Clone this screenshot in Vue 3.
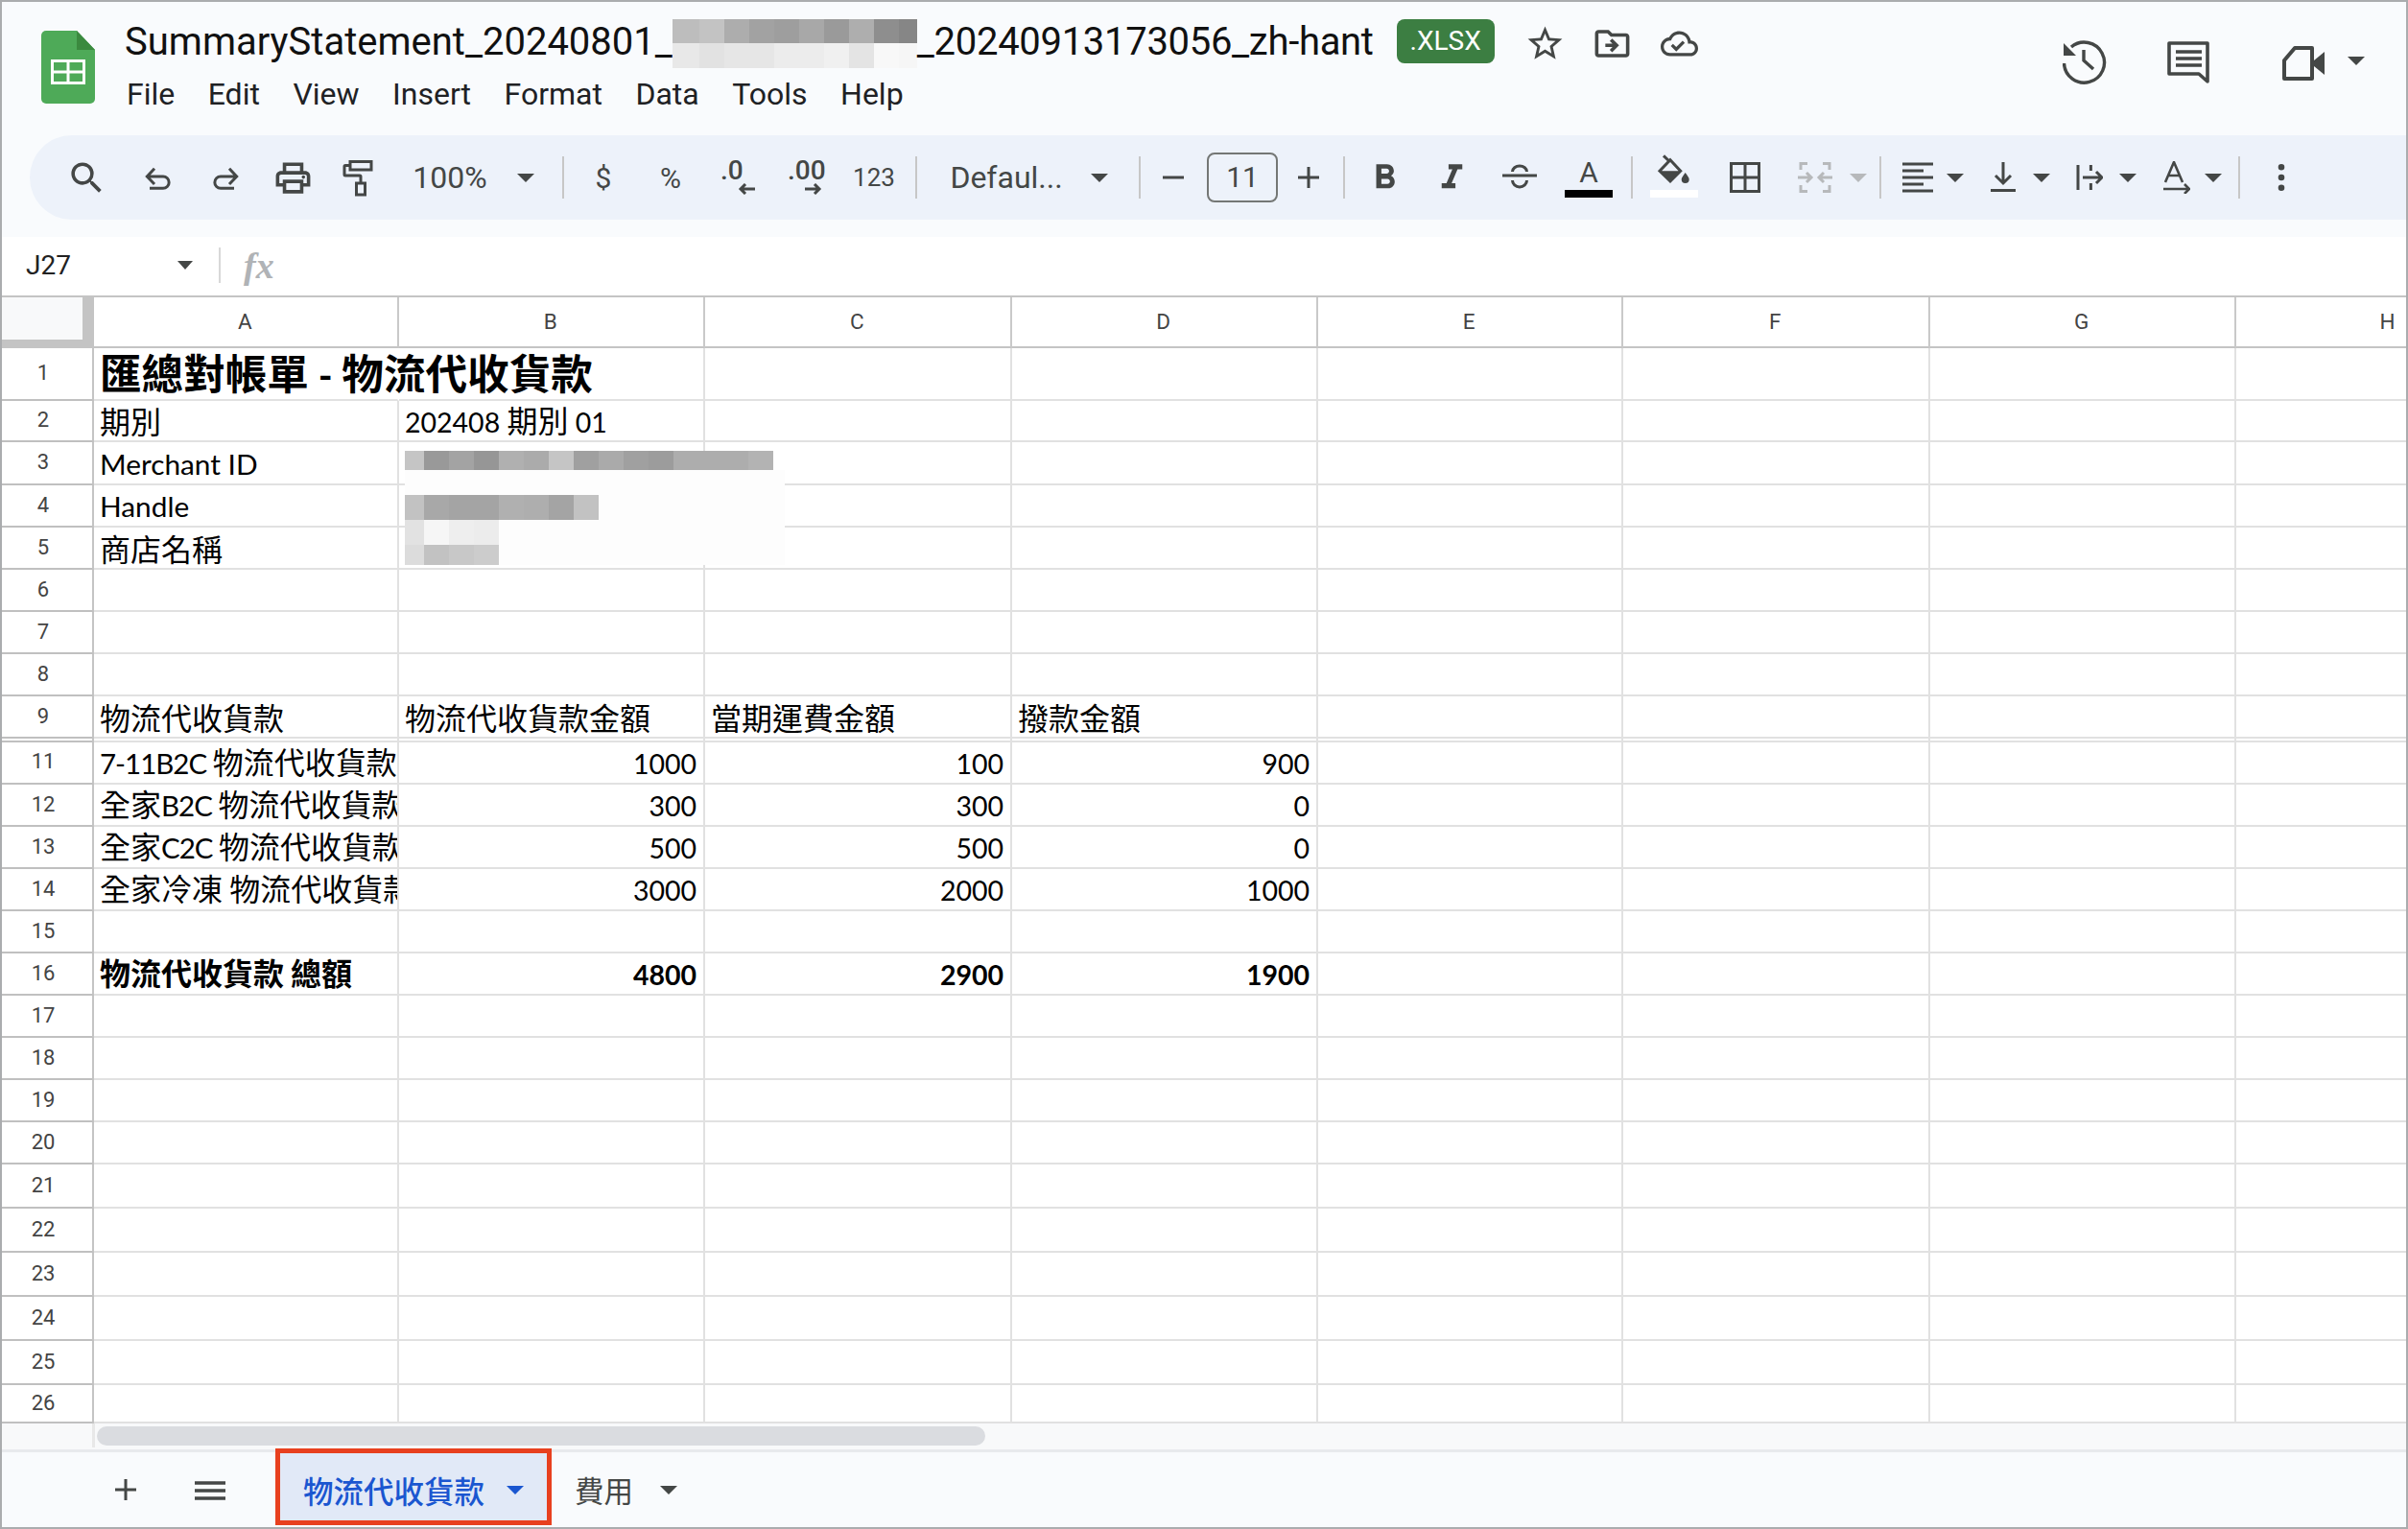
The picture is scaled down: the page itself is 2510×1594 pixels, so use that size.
<template>
  <div class="sheet-app">
    <header class="doc-head">
      <svg class="logo" width="56" height="76" viewBox="0 0 56 76">
        <path d="M5 0H37L56 20V71a5 5 0 0 1-5 5H5a5 5 0 0 1-5-5V5a5 5 0 0 1 5-5z" fill="#4eaa58" />
        <path d="M37 0 56 20H37z" fill="#3b8a3f" />
        <path d="M10 30H46V56H10zM13 33v8.5H26.5V33zM29.5 33v8.5H43V33zM13 44.5V53H26.5V44.5zM29.5 44.5V53H43V44.5z" fill="#fff" fill-rule="evenodd" />
      </svg>
      <div class="head-main">
        <div class="title-row">
          <span class="title">SummaryStatement_20240801_</span>
          <div class="title-blur">
            <i v-for="(c, i) in titleBlur" :key="i" :style="{ background: c }"></i>
          </div>
          <span class="title tail">_20240913173056_zh-hant</span>
          <span class="badge">.XLSX</span>
          <svg class="title-ic first" width="43" height="43" viewBox="0 0 24 24"><path :d="paths.star" /></svg>
          <svg class="title-ic" width="43" height="43" viewBox="0 0 24 24"><path :d="paths.move" /></svg>
          <svg class="title-ic cloud" width="39" height="39" viewBox="0 0 24 24"><path :d="paths.cloud" /></svg>
        </div>
        <nav class="menu">
          <span v-for="m in menus" :key="m">{{ m }}</span>
        </nav>
      </div>
      <div class="head-actions">
        <svg width="46" height="46" viewBox="0 0 46 46" class="act-history">
          <path d="M9 7A21 21 0 1 1 1.5 24" fill="none" stroke="currentColor" stroke-width="3.4" />
          <path d="M1 3V16H14z" fill="currentColor" />
          <path d="M22 10V21L32 30" fill="none" stroke="currentColor" stroke-width="3.4" />
        </svg>
        <svg width="44" height="46" viewBox="0 0 44 46" class="act-comment">
          <path d="M2 2H42V42L33 34H2z" fill="none" stroke="currentColor" stroke-width="3.6" stroke-linejoin="round" />
          <path d="M9 11H36M9 18H36M9 25H36" stroke="currentColor" stroke-width="3.6" />
        </svg>
        <svg width="44" height="36" viewBox="0 0 44 36" class="act-video">
          <path d="M2 15 13 2H31V34H2z" fill="none" stroke="currentColor" stroke-width="4" stroke-linejoin="round" />
          <path d="M33 15 44 6V30L33 21z" fill="currentColor" />
        </svg>
        <span class="caret act-caret"></span>
      </div>
    </header>

    <div class="toolbar">
      <div
        v-for="(t, i) in tools"
        :key="i"
        class="tool"
        :style="{ marginLeft: t.ml + 'px', width: t.w + 'px' }"
        :class="t.cls"
      >
        <span v-if="t.sep" class="sep"></span>
        <span v-else-if="t.caret" class="caret"></span>
        <span v-else-if="t.text" class="tool-text">{{ t.text }}</span>
        <template v-else-if="t.decimal">
          <span class="dec-text">{{ t.decimal }}</span>
          <svg class="dec-arrow" width="18" height="12" viewBox="0 0 18 12">
            <path :d="t.arrow" fill="none" stroke="currentColor" stroke-width="3" />
          </svg>
        </template>
        <template v-else-if="t.size">
          <span class="size-box">{{ t.size }}</span>
        </template>
        <template v-else-if="t.letter">
          <span class="letter">{{ t.letter }}</span>
          <span class="color-bar black"></span>
        </template>
        <template v-else>
          <svg :width="t.sw" :height="t.sh" :viewBox="t.vb">
            <path v-for="d in t.fill || []" :key="d" :d="d" fill="currentColor" />
            <path v-for="d in t.line || []" :key="d" :d="d" fill="none" stroke="currentColor" :stroke-width="t.lw || 3" />
          </svg>
          <span v-if="t.bar" class="color-bar white"></span>
        </template>
      </div>
    </div>

    <div class="formula-gap"></div>
    <div class="formula-bar">
      <span class="cell-ref">J27</span>
      <span class="caret small"></span>
      <span class="fx-sep"></span>
      <span class="fx">fx</span>
    </div>

    <div class="grid">
      <div class="row col-head">
        <div class="corner"><div class="corner-in"></div></div>
        <div v-for="c in columns" :key="c" class="col-label">{{ c }}</div>
      </div>
      <div v-for="r in rows" :key="r.key" class="row" :style="{ height: r.h + 'px' }">
        <div class="row-num">{{ r.n }}</div>
        <div
          v-for="(c, i) in r.cells"
          :key="i"
          class="cell"
          :class="{ right: c.right, bold: c.bold, big: c.big }"
        >
          <div class="cell-text">
            <span v-for="(p, j) in c.parts" :key="j" :class="p.cls">{{ p.t }}</span>
          </div>
        </div>
      </div>
      <!-- pixelated area that hides the merchant details -->
      <div class="cell-blur">
        <i v-for="(c, i) in cellBlur" :key="i" :style="{ background: c }"></i>
      </div>
    </div>

    <div class="scroll-row">
      <div class="scroll-strip"></div>
      <div class="scroll-thumb"></div>
    </div>

    <footer class="tabs">
      <svg class="tab-ic" width="24" height="24" viewBox="0 0 24 24">
        <path d="M12 1V23M1 12H23" stroke="currentColor" stroke-width="3" />
      </svg>
      <svg class="tab-ic menu-ic" width="32" height="20" viewBox="0 0 32 20">
        <path d="M0 2H32M0 10H32M0 18H32" stroke="currentColor" stroke-width="3.6" />
      </svg>
      <div class="tab active">
        <span>物流代收貨款</span>
        <span class="caret"></span>
      </div>
      <div class="tab">
        <span>費用</span>
        <span class="caret"></span>
      </div>
    </footer>
  </div>
</template>

<script setup>
const gray = (v) => '#' + v + v + v

const titleBlur = [
  'bd', 'c3', 'ad', 'a2', '9e', 'a8', '9a', 'ae', '8e', '86',
  'e8', 'e2', 'e6', 'e6', 'ec', 'ec', 'f0', 'e4', 'f8', 'f6'
].map(gray)

const blurRow = (vals) => {
  const out = [...vals]
  while (out.length < 16) out.push('fd')
  return out
}
const cellBlur = [
  ...blurRow(['c5', '99', 'a3', '96', 'b0', 'ab', 'c5', 'a0', 'aa', 'a0', '9c', 'ad', 'ad', 'ad', 'b3', 'ff']),
  ...blurRow([]),
  ...blurRow(['c2', 'a8', 'a4', 'a4', 'b0', 'ae', 'a4', 'c2']),
  ...blurRow(['e2', 'f6', 'ee', 'ec']),
  ...blurRow(['dc', 'c2', 'c8', 'cc'])
].map(gray)

const menus = ['File', 'Edit', 'View', 'Insert', 'Format', 'Data', 'Tools', 'Help']
const columns = ['A', 'B', 'C', 'D', 'E', 'F', 'G', 'H']

const paths = {
  star: 'M22 9.24l-7.19-.62L12 2 9.19 8.63 2 9.24l5.46 4.73L5.82 21 12 17.27 18.18 21l-1.63-7.03L22 9.24zM12 15.4l-3.76 2.27 1-4.28-3.32-2.88 4.38-.38L12 6.1l1.71 4.04 4.38.38-3.32 2.88 1 4.28L12 15.4z',
  move: 'M20 6h-8l-2-2H4c-1.1 0-2 .9-2 2v12c0 1.1.9 2 2 2h16c1.1 0 2-.9 2-2V8c0-1.1-.9-2-2-2zm0 12H4V6h5.17l2 2H20v10zm-8.01-9l-1.41 1.41L12.16 12H8v2h4.16l-1.59 1.59L11.99 17 16 13.01 11.99 9z',
  cloud: 'M19.35 10.04C18.67 6.59 15.64 4 12 4 9.11 4 6.6 5.64 5.35 8.04 2.34 8.36 0 10.91 0 14c0 3.31 2.69 6 6 6h13c2.76 0 5-2.24 5-5 0-2.64-2.05-4.78-4.65-4.96zM19 18H6c-2.21 0-4-1.79-4-4s1.79-4 4-4h.71C7.37 7.69 9.48 6 12 6c3.04 0 5.5 2.46 5.5 5.5v.5H19c1.66 0 3 1.34 3 3s-1.34 3-3 3zM10 14.17l-2.09-2.08L6.5 13.5 10 17l5.5-5.5-1.41-1.41z'
}

const material = (at, d) => ({ at, w: 43, sw: 43, sh: 43, vb: '0 0 24 24', fill: [d] })

const rawTools = [
  material(90, 'M15.5 14h-.79l-.28-.27A6.471 6.471 0 0 0 16 9.5 6.5 6.5 0 1 0 9.5 16c1.61 0 3.09-.59 4.23-1.57l.27.28v.79l5 4.99L20.49 19l-4.99-5zm-6 0C7.01 14 5 11.99 5 9.5S7.01 5 9.5 5 14 7.01 14 9.5 11.99 14 9.5 14z'),
  { at: 165, w: 30, sw: 30, sh: 27, vb: '0 0 30 27', line: ['M11 3.7 3.3 12l7.7 8M3.3 12H20a6.15 6.15 0 0 1 0 12.3H6'] },
  { at: 235, w: 30, sw: 30, sh: 27, vb: '0 0 30 27', line: ['M19 3.7 26.7 12 19 20M26.7 12H10a6.15 6.15 0 0 0 0 12.3h14'] },
  material(305, 'M19 8h-1V3H6v5H5c-1.66 0-3 1.34-3 3v6h4v4h12v-4h4v-6c0-1.66-1.34-3-3-3zM8 5h8v3H8V5zm8 12v2H8v-4h8v2zm2-2v-2H6v2H4v-4c0-.55.45-1 1-1h14c.55 0 1 .45 1 1v4h-2zM18 10.5a1 1 0 1 0 0 2 1 1 0 0 0 0-2z'),
  {
    at: 372, w: 40, sw: 40, sh: 44, vb: '0 0 40 44',
    line: ['M13 5.5H35V14H13zM13 9.5H8a1 1 0 0 0-1 1V19a1 1 0 0 0 1 1H23a1 1 0 0 1 1 1V28M19.5 28H28.5V40H19.5z']
  },
  { at: 469, w: 84, text: '100%' },
  { at: 548, w: 18, caret: true },
  { at: 587, w: 2, sep: true },
  { at: 629, w: 20, text: '$', cls: 'sym' },
  { at: 699, w: 26, text: '%', cls: 'sym' },
  { at: 769, w: 36, decimal: '.0', arrow: 'M18 6H3M8 1 3 6l5 5', cls: 'dec' },
  { at: 839, w: 36, decimal: '.00', arrow: 'M0 6H15M10 1l5 5-5 5', cls: 'dec' },
  { at: 911, w: 40, text: '123', cls: 'num' },
  { at: 955, w: 2, sep: true },
  { at: 1049, w: 118, text: 'Defaul...' },
  { at: 1146, w: 18, caret: true },
  { at: 1188, w: 2, sep: true },
  { at: 1223, w: 22, sw: 22, sh: 4, vb: '0 0 22 4', line: ['M0 2H22'] },
  { at: 1295, w: 74, size: '11' },
  { at: 1364, w: 22, sw: 22, sh: 22, vb: '0 0 22 22', line: ['M11 0V22M0 11H22'] },
  { at: 1401, w: 2, sep: true },
  material(1443, 'M15.6 10.79c.97-.67 1.65-1.77 1.65-2.79 0-2.26-1.75-4-4-4H7v14h7.04c2.09 0 3.71-1.7 3.71-3.79 0-1.52-.86-2.82-2.15-3.42zM10 6.5h3c.83 0 1.5.67 1.5 1.5s-.67 1.5-1.5 1.5h-3v-3zm3.5 9H10v-3h3.5c.83 0 1.5.67 1.5 1.5s-.67 1.5-1.5 1.5z'),
  material(1513, 'M10 4v3h2.21l-3.42 8H6v3h8v-3h-2.21l3.42-8H18V4z'),
  { at: 1584, w: 36, sw: 36, sh: 28, vb: '0 0 36 28', line: ['M0 12H36M10.5 8a7.5 6 0 0 1 15 0M10.5 17a7.5 7 0 0 0 15 0'] },
  { at: 1656, w: 50, letter: 'A', cls: 'col' },
  { at: 1701, w: 2, sep: true },
  {
    at: 1745, w: 51, sw: 36, sh: 34, vb: '0 0 36 34', bar: true, cls: 'col lift',
    line: ['M14 6.7 24.7 18.3 14 29 3 18.3zM7 2.3 14 9'],
    fill: ['M3 18.3H24.7L14 29zM29.7 20c-2 3-4 5-4 7a4 4 0 0 0 8 0c0-2-2-4-4-7z']
  },
  { at: 1819, w: 32, sw: 32, sh: 32, vb: '0 0 32 32', line: ['M1.5 1.5H30.5V30.5H1.5zM16 1.5V30.5M1.5 16H30.5'] },
  {
    at: 1892, w: 36, sw: 36, sh: 32, vb: '0 0 36 32', cls: 'off',
    line: ['M10 1.5H3V8M3 24v6.5H10M26 1.5h7V8M33 24v6.5H26M0 16H14M9 11l5 5-5 5M36 16H22M27 11l-5 5 5 5']
  },
  { at: 1937, w: 18, caret: true, cls: 'off' },
  { at: 1960, w: 2, sep: true },
  {
    at: 1999, w: 32, sw: 32, sh: 32, vb: '0 0 32 32',
    line: ['M0 2H32M0 9H22M0 16H32M0 23H22M0 30H32']
  },
  { at: 2038, w: 18, caret: true },
  { at: 2088, w: 26, sw: 26, sh: 32, vb: '0 0 26 32', line: ['M13 0V22M5 14l8 8 8-8M0 29.5H26'] },
  { at: 2128, w: 18, caret: true },
  { at: 2178, w: 28, sw: 28, sh: 32, vb: '0 0 28 32', line: ['M2 3V29M15.4 3V9M15.4 22V29M7 16H27M21 10l6 6-6 6'] },
  { at: 2218, w: 18, caret: true },
  { at: 2269, w: 28, sw: 28, sh: 34, vb: '0 0 28 34', lw: 2.6, line: ['M2 22 11 1 20 22M5.5 15H16.5M0 29H27M22 24l5 5-5 5'] },
  { at: 2307, w: 18, caret: true },
  { at: 2334, w: 2, sep: true },
  {
    at: 2378, w: 8, sw: 8, sh: 28, vb: '0 0 8 28',
    fill: ['M4 0a3.3 3.3 0 1 0 0 6.6A3.3 3.3 0 0 0 4 0zM4 10.7a3.3 3.3 0 1 0 0 6.6 3.3 3.3 0 0 0 0-6.6zM4 21.4a3.3 3.3 0 1 0 0 6.6 3.3 3.3 0 0 0 0-6.6z']
  }
]

// slots flow left to right, the gap in front of each comes from its centre
let edge = 31
const tools = rawTools.map((t) => {
  const ml = t.at - t.w / 2 - edge
  edge = t.at + t.w / 2
  return { ...t, ml }
})

// the sheet font has narrow digits and wide letters, Lato needs a nudge per kind
const latClass = (s) => {
  if (/[a-z]/i.test(s) && /\d/.test(s)) return 'lat mix'
  if (/[a-z]/i.test(s)) return 'lat word'
  return 'lat'
}

const toParts = (text) =>
  text
    .split(/([\x00-\x7f]+)/)
    .filter((s) => s !== '')
    .map((s) => ({ t: s, cls: /^[\x00-\x7f]+$/.test(s) ? latClass(s) : '' }))

const makeRow = (key, n, h, vals = [], opts = {}) => {
  const cells = []
  for (let i = 0; i < 8; i++) {
    const v = vals[i] === undefined ? '' : String(vals[i])
    cells.push({
      parts: toParts(v),
      right: typeof vals[i] === 'number',
      bold: !!opts.bold,
      big: !!opts.big && i === 0
    })
  }
  return { key, n, h, cells }
}

const rows = [
  makeRow(1, 1, 55, ['匯總對帳單 - 物流代收貨款'], { big: true, bold: true }),
  makeRow(2, 2, 43, ['期別', '202408 期別 01']),
  makeRow(3, 3, 45, ['Merchant ID']),
  makeRow(4, 4, 44, ['Handle']),
  makeRow(5, 5, 44, ['商店名稱']),
  makeRow(6, 6, 44),
  makeRow(7, 7, 44),
  makeRow(8, 8, 44),
  makeRow(9, 9, 44, ['物流代收貨款', '物流代收貨款金額', '當期運費金額', '撥款金額']),
  makeRow(10, '', 3),
  makeRow(11, 11, 45, ['7-11B2C 物流代收貨款', 1000, 100, 900]),
  makeRow(12, 12, 44, ['全家B2C 物流代收貨款', 300, 300, 0]),
  makeRow(13, 13, 44, ['全家C2C 物流代收貨款', 500, 500, 0]),
  makeRow(14, 14, 44, ['全家冷凍 物流代收貨款', 3000, 2000, 1000]),
  makeRow(15, 15, 44),
  makeRow(16, 16, 44, ['物流代收貨款 總額', 4800, 2900, 1900], { bold: true }),
  makeRow(17, 17, 44),
  makeRow(18, 18, 44),
  makeRow(19, 19, 44),
  makeRow(20, 20, 44),
  makeRow(21, 21, 46),
  makeRow(22, 22, 46),
  makeRow(23, 23, 46),
  makeRow(24, 24, 46),
  makeRow(25, 25, 46),
  makeRow(26, 26, 40)
]
</script>

<style scoped>
.sheet-app {
  width: 2510px;
  height: 1594px;
  box-sizing: border-box;
  border: 2px solid #aaacae;
  background: #f9fbfd;
  overflow: hidden;
  display: flex;
  flex-direction: column;
  font-family: Roboto, "Noto Sans CJK TC", sans-serif;
  color: #444746;
}

.doc-head {
  height: 139px;
  flex-shrink: 0;
  display: flex;
  position: relative;
}

.logo {
  margin: 30px 0 0 41px;
  flex-shrink: 0;
}

.head-main {
  margin-left: 31px;
  padding-top: 18px;
}

.title-row {
  display: flex;
  align-items: center;
  height: 46px;
  white-space: nowrap;
}

.title {
  font-size: 40px;
  color: #111;
  line-height: 46px;
  padding-top: 2px;
}

.title.tail {
  letter-spacing: -0.3px;
}

.title-blur {
  display: grid;
  grid-template-columns: 28px repeat(8, 26px) 19px;
  grid-template-rows: 25px 26px;
  flex-shrink: 0;
  margin-top: 5px;
}

.title-blur i {
  display: block;
}

.badge {
  margin-left: 24px;
  width: 102px;
  height: 46px;
  line-height: 46px;
  border-radius: 8px;
  background: #3c7e42;
  color: #fff;
  font-size: 28px;
  text-align: center;
}

.title-ic {
  fill: currentColor;
  flex-shrink: 0;
  margin: 4px 0 0 27px;
}

.title-ic.first {
  margin-left: 31px;
}

.title-ic.cloud {
  margin-left: 29px;
}

.menu {
  display: flex;
  gap: 34.5px;
  margin-top: 12px;
  margin-left: 2px;
  font-size: 32px;
  line-height: 40px;
  color: #202124;
}

.head-actions {
  position: absolute;
  top: 0;
  left: 2148px;
  display: flex;
  align-items: flex-start;
}

.act-history {
  margin-top: 40px;
}

.act-comment {
  margin: 41px 0 0 63px;
}

.act-video {
  margin: 46px 0 0 76px;
}

.act-caret {
  margin: 57px 0 0 24px;
  border-left-width: 8px;
  border-right-width: 8px;
}

.caret {
  display: block;
  flex-shrink: 0;
  width: 0;
  height: 0;
  border-left: 9px solid transparent;
  border-right: 9px solid transparent;
  border-top: 9px solid currentColor;
}

.toolbar {
  height: 88px;
  flex-shrink: 0;
  margin-left: 29px;
  background: #edf2fa;
  border-radius: 44px 0 0 44px;
  display: flex;
  align-items: center;
}

.tool {
  flex-shrink: 0;
  display: flex;
  align-items: center;
  justify-content: center;
  white-space: nowrap;
  height: 60px;
}

.tool.col,
.tool.dec {
  flex-direction: column;
}

.tool.lift {
  flex-direction: column;
  margin-top: -4px;
}

.tool.off {
  color: #b7b9bb;
}

.tool-text {
  font-size: 32px;
}

.sym .tool-text {
  font-size: 30px;
}

.num .tool-text {
  font-size: 26px;
}

.sep {
  display: block;
  width: 2px;
  height: 44px;
  background: #c7c7c7;
}

.dec {
  align-items: flex-start;
}

.dec-text {
  font-size: 28px;
  font-weight: 500;
  line-height: 22px;
}

.dec-arrow {
  align-self: flex-end;
  margin-top: 2px;
}

.size-box {
  box-sizing: border-box;
  width: 74px;
  height: 52px;
  line-height: 48px;
  border: 2.5px solid #747775;
  border-radius: 8px;
  text-align: center;
  font-size: 30px;
}

.letter {
  font-size: 30px;
  line-height: 32px;
  height: 32px;
}

.color-bar {
  display: block;
  width: 50px;
  height: 8px;
  margin-top: 2px;
}

.color-bar.black {
  background: #000;
}

.color-bar.white {
  background: #fff;
  margin-top: 4px;
}

.formula-gap {
  height: 18px;
  flex-shrink: 0;
}

.formula-bar {
  height: 63px;
  flex-shrink: 0;
  box-sizing: border-box;
  background: #fff;
  border-bottom: 2px solid #c4c4c4;
  display: flex;
  align-items: center;
  padding: 0 0 2px 25px;
}

.cell-ref {
  width: 158px;
  font-size: 28px;
  color: #222;
}

.caret.small {
  border-left-width: 8px;
  border-right-width: 8px;
}

.fx-sep {
  width: 2px;
  height: 37px;
  margin-left: 27px;
  background: #d8d8d8;
}

.fx {
  margin-left: 24px;
  font-family: "Liberation Serif", serif;
  font-style: italic;
  font-weight: 700;
  font-size: 38px;
  color: #b0b3b6;
  line-height: 1;
}

.grid {
  position: relative;
  height: 1174px;
  flex-shrink: 0;
  background: #fff;
  overflow: hidden;
}

.row {
  display: grid;
  grid-template-columns: 96px 318px 319px 320px 319px 318px 320px 319px 320px;
  box-sizing: border-box;
}

.col-head {
  height: 53px;
}

.corner {
  box-sizing: border-box;
  border-right: 2px solid #c4c4c4;
  border-bottom: 2px solid #c4c4c4;
}

.corner-in {
  width: 84px;
  height: 44px;
  background: #f8f9fa;
  border-right: 10px solid #c4c4c4;
  border-bottom: 7px solid #c4c4c4;
}

.col-label {
  box-sizing: border-box;
  border-right: 2px solid #c9c9c9;
  border-bottom: 2px solid #c4c4c4;
  padding: 0 1.5px 2px 0;
  display: flex;
  align-items: center;
  justify-content: center;
  font-size: 22.5px;
  color: #444;
}

.col-label:last-child {
  border-right: none;
  padding-right: 5px;
}

.row-num {
  box-sizing: border-box;
  border-right: 2px solid #c4c4c4;
  border-bottom: 2px solid #c0c0c0;
  padding: 0 8px 2px 0;
  display: flex;
  align-items: center;
  justify-content: center;
  font-size: 22px;
  color: #444;
  overflow: hidden;
}

.cell {
  box-sizing: border-box;
  border-right: 2px solid #e1e1e1;
  border-bottom: 2px solid #e1e1e1;
  padding: 0 6px 1px;
  display: flex;
  align-items: center;
  overflow: hidden;
  font-size: 32px;
  color: #000;
  font-family: "Noto Sans CJK TC", sans-serif;
}

.cell.right {
  justify-content: flex-end;
  padding-right: 7px;
}

.cell.bold {
  font-weight: 700;
}

.cell.big {
  font-size: 43.6px;
  overflow: visible;
  border-right-color: transparent;
}

.cell-text {
  white-space: pre;
  line-height: 40px;
}

.lat {
  font-family: Lato, sans-serif;
  font-size: 28.5px;
}

.lat.word {
  font-size: 29.8px;
}

.lat.mix {
  font-size: 29.5px;
  letter-spacing: -1px;
}

.big .lat {
  font-size: 40px;
}

.cell-blur {
  position: absolute;
  left: 420px;
  top: 160px;
  display: grid;
  grid-template-columns: 20px repeat(14, 26px) 12px;
  grid-template-rows: 20px 26px 26px 26px 21px;
}

.cell-blur i {
  display: block;
}

.scroll-row {
  height: 27px;
  flex-shrink: 0;
  box-sizing: border-box;
  background: #f8f9fa;
  display: flex;
  padding-left: 94px;
}

.scroll-strip {
  width: 3px;
  height: 25px;
  background: #e8e8e8;
}

.scroll-thumb {
  width: 926px;
  height: 20px;
  margin: 3px 0 0 2px;
  border-radius: 10px;
  background: #dadce0;
}

.tabs {
  flex: 1;
  display: flex;
  align-items: flex-start;
  border-top: 3px solid #e8eaed;
}

.tab-ic {
  flex-shrink: 0;
  margin: 27px 0 0 117px;
}

.menu-ic {
  margin: 30px 0 0 60px;
}

.tab {
  box-sizing: border-box;
  display: flex;
  align-items: center;
  font-size: 30.5px;
  height: 80px;
  margin-top: -4px;
  padding: 6px 0 0 24px;
}

.tab .caret {
  margin-left: 28px;
}

.tab.active {
  width: 288px;
  margin-left: 52px;
  padding: 6px 0 0 24px;
  border: 5px solid #e8401f;
  background: #e1e9f7;
  color: #1a56d0;
  font-size: 31.5px;
  font-weight: 500;
}

.tab.active .caret {
  margin-left: 23px;
}
</style>
